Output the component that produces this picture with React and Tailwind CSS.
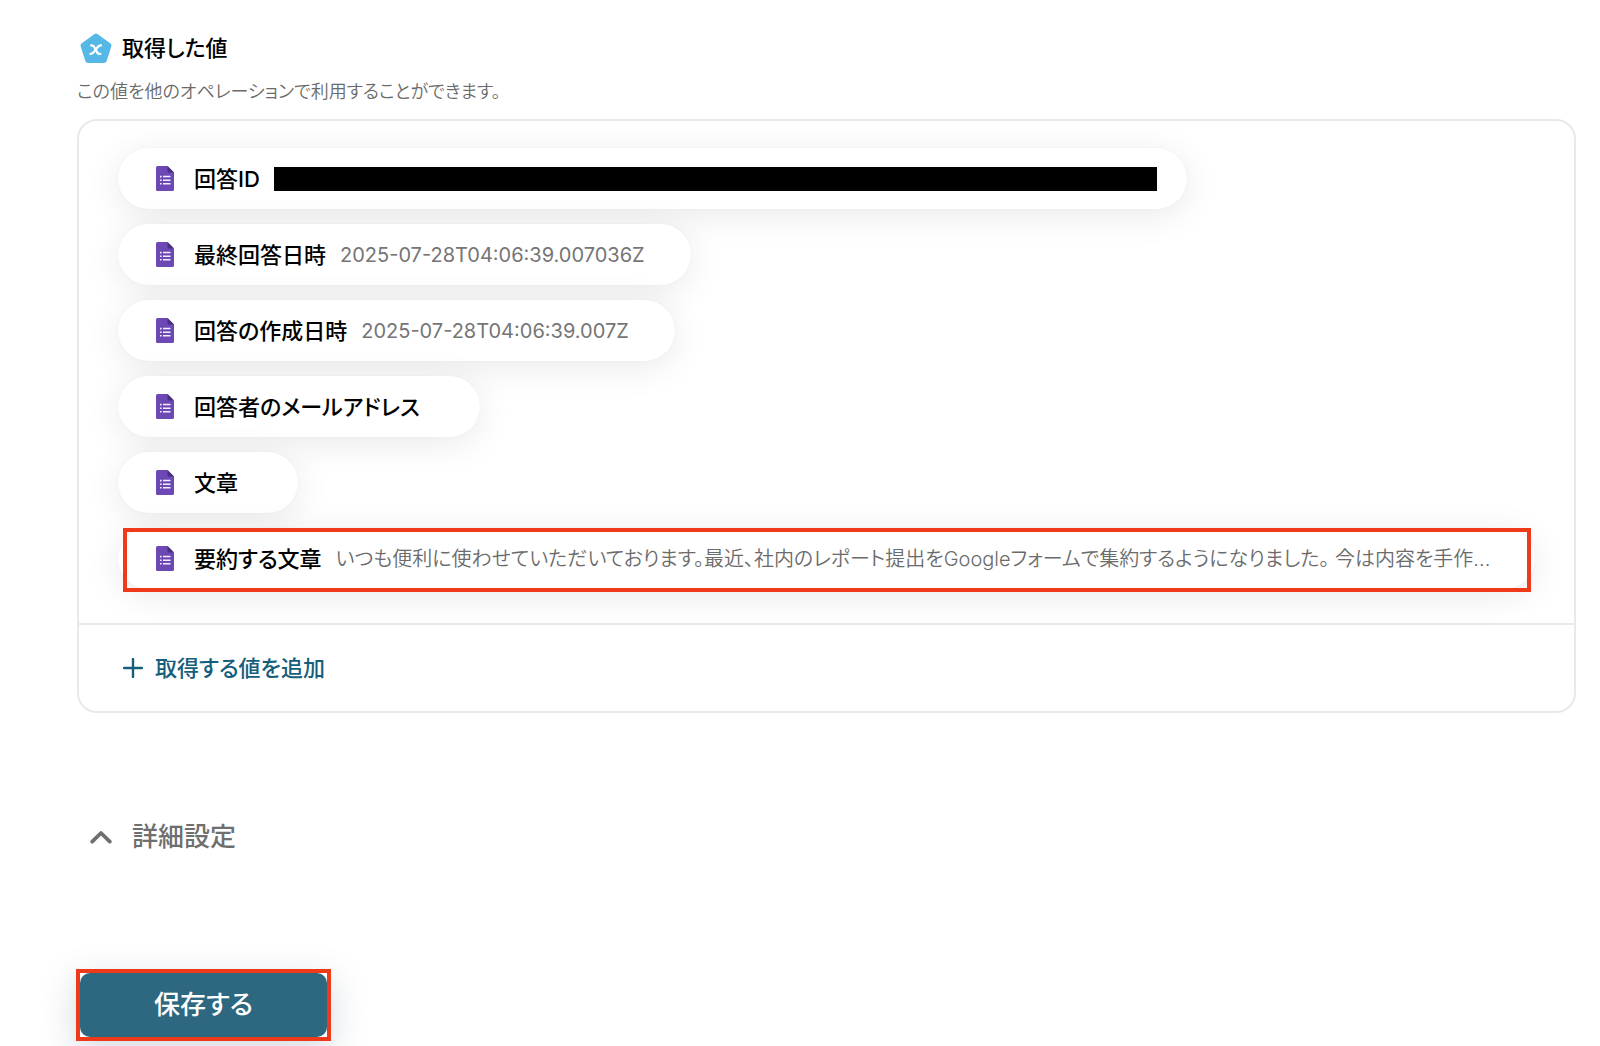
const fields = [
  { label: '回答ID', redacted: true },
  { label: '最終回答日時', value: '2025-07-28T04:06:39.007036Z' },
  { label: '回答の作成日時', value: '2025-07-28T04:06:39.007Z' },
  { label: '回答者のメールアドレス' },
  { label: '文章' },
  {
    label: '要約する文章',
    value:
      'いつも便利に使わせていただいております。最近、社内のレポート提出をGoogleフォームで集約するようになりました。 今は内容を手作...',
    highlighted: true,
  },
];

function PentagonIcon() {
  return (
    <svg className="h-8 w-8 shrink-0" viewBox="0 0 32 32" aria-hidden="true">
      <path
        d="M16 4 L29 13.5 L24.2 28.5 H7.8 L3 13.5 Z"
        fill="#55b8e6"
        stroke="#55b8e6"
        strokeWidth="5"
        strokeLinejoin="round"
      />
      <path
        d="M11.2 13.4 C13.6 12.8 14 14.6 15.7 17.6 C17.4 20.8 17.8 22.4 20.4 21.8 M21 13.4 C18.6 13 17.8 14.8 15.7 17.6 C13.6 20.6 12.8 22.2 10.4 21.8"
        fill="none"
        stroke="#fff"
        strokeWidth="2.3"
        strokeLinecap="round"
      />
    </svg>
  );
}

function FormIcon() {
  return (
    <svg className="h-[25px] w-[18px] shrink-0" viewBox="0 0 18 25" aria-hidden="true">
      <path d="M1.5 0 H11.5 L18 6.5 V23.5 Q18 25 16.5 25 H1.5 Q0 25 0 23.5 V1.5 Q0 0 1.5 0 Z" fill="#6c48b4" />
      <path d="M11.5 0 L18 6.5 H13 Q11.5 6.5 11.5 5 Z" fill="#48307c" />
      <path d="M7 10.6 H14.5 M7 14.2 H14.5 M7 17.8 H14.5" stroke="#f3eefb" strokeWidth="1.5" />
      <path d="M4 10.6 H5.6 M4 14.2 H5.6 M4 17.8 H5.6" stroke="#f3eefb" strokeWidth="1.6" />
    </svg>
  );
}

function Pill({ field }) {
  return (
    <li
      className={
        'relative flex h-[61px] max-w-full items-center rounded-full bg-white pl-[38px] shadow-[0_6px_36px_rgba(0,0,0,0.09),0_0_2px_rgba(0,0,0,0.05)] ' +
        (field.highlighted ? 'w-full pr-4' : field.redacted ? 'pr-[30px]' : 'pr-[46px]')
      }
    >
      <FormIcon />
      <span className="ml-5 shrink-0 text-[22px] leading-8 font-medium text-black">{field.label}</span>
      {field.redacted ? (
        <span className="ml-3.5 h-6 w-[883px] shrink bg-black" />
      ) : (
        <span
          className={
            'ml-3.5 truncate text-[20px] leading-8 ' +
            (field.highlighted ? 'font-[350] text-[#6b6b6b]' : 'font-normal text-[#757575]')
          }
        >
          {field.value}
        </span>
      )}
      {field.highlighted && (
        <span className="pointer-events-none absolute top-0 right-1 -bottom-[3px] left-[5px] border-4 border-[#ee3a1a]" />
      )}
    </li>
  );
}

export default function App() {
  return (
    <main className="min-h-screen bg-white pt-8 pr-6 pb-1.5 pl-[77px] font-['Inter','Noto_Sans_CJK_JP',sans-serif] [font-feature-settings:'palt']">
      <section>
        <div className="flex items-center gap-2.5 pl-[3px]">
          <PentagonIcon />
          <h1 className="text-[22px] leading-8 font-medium text-black">取得した値</h1>
        </div>
        <p className="mt-4 text-[18px] leading-6 font-[350] text-[#6b6b6b]">
          この値を他のオペレーションで利用することができます。
        </p>
        <div className="mt-[15px] overflow-hidden rounded-[20px] border-2 border-[#e9e9e9]">
          <ul className="flex flex-col items-start gap-[15px] px-[39px] pt-[27px] pb-[34px]">
            {fields.map((field) => (
              <Pill key={field.label} field={field} />
            ))}
          </ul>
          <div className="flex h-[88px] items-center border-t-2 border-[#e9e9e9] pl-11">
            <button type="button" className="flex items-center gap-3 text-[22px] leading-8 font-medium text-[#155e7c]">
              <svg className="h-5 w-5" viewBox="0 0 20 20" aria-hidden="true">
                <path d="M10 1 V19 M1 10 H19" stroke="currentColor" strokeWidth="2.4" strokeLinecap="round" />
              </svg>
              取得する値を追加
            </button>
          </div>
        </div>
      </section>

      <button
        type="button"
        className="mt-[106px] ml-[13px] flex items-center gap-5 text-[26px] leading-9 font-medium text-[#6f6f6f]"
      >
        <svg className="h-5 w-[22px]" viewBox="0 0 22 20" aria-hidden="true">
          <path
            d="M2.2 14.6 L11 6 L19.8 14.6"
            fill="none"
            stroke="currentColor"
            strokeWidth="3.8"
            strokeLinecap="round"
            strokeLinejoin="round"
          />
        </svg>
        詳細設定
      </button>

      <div className="mt-[114px] -ml-px w-[255px] border-4 border-[#ee3a1a] shadow-[0_10px_36px_rgba(20,50,80,0.18)]">
        <button
          type="button"
          className="h-16 w-full rounded-[10px] bg-[#2e6780] text-[26px] leading-9 font-medium text-white"
        >
          保存する
        </button>
      </div>
    </main>
  );
}
